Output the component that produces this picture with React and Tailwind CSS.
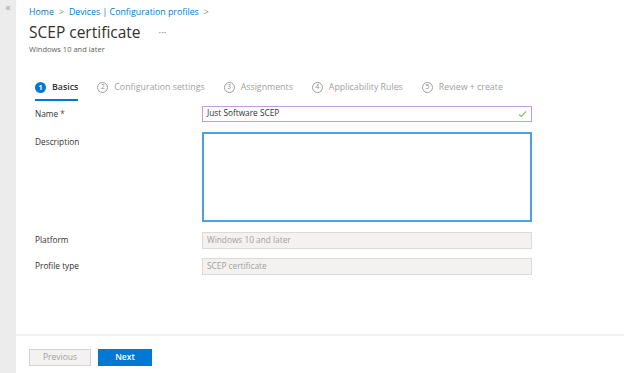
import React from "react";

function Step({ n, label, active }) {
  return (
    <div className="flex flex-col">
      <div className="flex items-center gap-[6px] h-[20px]">
        {active ? (
          <span className="w-[11px] h-[11px] rounded-full bg-[#0078d4] text-white text-[7px] font-bold flex items-center justify-center leading-none">{n}</span>
        ) : (
          <span className="w-[11px] h-[11px] rounded-full border border-[#a19f9d] text-[#8a8886] text-[6.5px] flex items-center justify-center leading-none">{n}</span>
        )}
        <span className={active ? "text-[#323130] font-semibold" : "text-[#a19f9d]"}>{label}</span>
      </div>
      <div className={active ? "h-[2px] bg-[#0078d4] mt-[1px]" : "h-[2px] mt-[1px]"} />
    </div>
  );
}

export default function App() {
  return (
    <div className="w-[624px] h-[373px] flex bg-white overflow-hidden" style={{ fontFamily: '"Open Sans", "Noto Sans", sans-serif' }}>
      <div className="w-[16px] bg-[#ececec] flex justify-center pt-[2px]">
        <span className="text-[#9a9a9a] text-[10px] leading-none">«</span>
      </div>
      <div className="flex-1 flex flex-col">
        <div className="flex-1 pl-[13px] pt-[6px]">
          <div className="flex items-center gap-[5px] text-[8.8px] text-[#0078d4] h-[14px]">
            <span>Home</span>
            <span className="text-[#8a8886]">&gt;</span>
            <span>Devices | Configuration profiles</span>
            <span className="text-[#8a8886]">&gt;</span>
          </div>
          <div className="flex items-center mt-[2px] h-[22px]">
            <span className="text-[15.5px] text-[#323130] leading-none">SCEP certificate</span>
            <span className="ml-[18px] text-[#8a8886] text-[10px] leading-none mb-[2px]">···</span>
          </div>
          <div className="text-[7.5px] text-[#605e5c] leading-none mt-[2px]">Windows 10 and later</div>

          <div className="pl-[6px] mt-[24px] flex gap-[19px] text-[8.8px]">
            <Step n="1" label="Basics" active />
            <Step n="2" label="Configuration settings" />
            <Step n="3" label="Assignments" />
            <Step n="4" label="Applicability Rules" />
            <Step n="5" label="Review + create" />
          </div>

          <div className="pl-[6px] mt-[5px] text-[8.3px] text-[#323130]">
            <div className="flex items-start h-[26px]">
              <div className="w-[167px] pt-[2px]">Name <span className="text-[#a4262c]">*</span></div>
              <div className="w-[330px] h-[16px] border border-[#c99ad9] flex items-center justify-between px-[4px]">
                <span>Just Software SCEP</span>
                <svg width="9" height="8" viewBox="0 0 9 8"><path d="M1 4.5 L3.3 6.5 L8 1.5" fill="none" stroke="#86c06a" strokeWidth="1.1" /></svg>
              </div>
            </div>
            <div className="flex items-start h-[100px]">
              <div className="w-[167px] pt-[4px]">Description</div>
              <div className="w-[330px] h-[90px] border-[2px] border-[#4aa3e8]" />
            </div>
            <div className="flex items-start h-[26px]">
              <div className="w-[167px] pt-[2px]">Platform</div>
              <div className="w-[330px] h-[17px] border border-[#dcdad8] bg-[#f3f2f1] flex items-center px-[4px] text-[#a19f9d]">Windows 10 and later</div>
            </div>
            <div className="flex items-start h-[26px]">
              <div className="w-[167px] pt-[2px]">Profile type</div>
              <div className="w-[330px] h-[17px] border border-[#dcdad8] bg-[#f3f2f1] flex items-center px-[4px] text-[#a19f9d]">SCEP certificate</div>
            </div>
          </div>
        </div>
        <div className="h-[2px] bg-[#f1f1f1]" />
        <div className="h-[37px] flex items-start pt-[13px] pl-[13px] gap-[7px] text-[8.5px]">
          <div className="w-[62px] h-[17px] border border-[#d6d4d2] bg-[#f3f2f1] text-[#a19f9d] flex items-center justify-center">Previous</div>
          <div className="w-[54px] h-[17px] bg-[#0078d4] text-white font-semibold flex items-center justify-center">Next</div>
        </div>
      </div>
    </div>
  );
}
